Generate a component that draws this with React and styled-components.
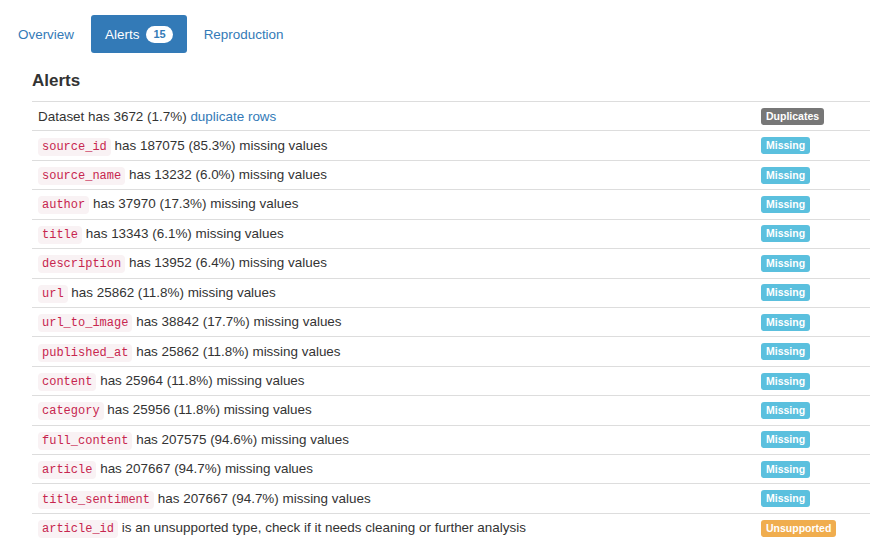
import React from "react";
import styled, { createGlobalStyle } from "styled-components";

const GlobalStyle = createGlobalStyle`
  body {
    margin: 0;
    background: #fff;
    font-family: "Liberation Sans", Arial, sans-serif;
    font-size: 13.45px;
    color: #333;
  }
`;

const alerts = [
  { text: ["Dataset has 3672 (1.7%) ", { link: "duplicate rows" }], kind: "Duplicates" },
  { col: "source_id", text: "has 187075 (85.3%) missing values", kind: "Missing" },
  { col: "source_name", text: "has 13232 (6.0%) missing values", kind: "Missing" },
  { col: "author", text: "has 37970 (17.3%) missing values", kind: "Missing" },
  { col: "title", text: "has 13343 (6.1%) missing values", kind: "Missing" },
  { col: "description", text: "has 13952 (6.4%) missing values", kind: "Missing" },
  { col: "url", text: "has 25862 (11.8%) missing values", kind: "Missing" },
  { col: "url_to_image", text: "has 38842 (17.7%) missing values", kind: "Missing" },
  { col: "published_at", text: "has 25862 (11.8%) missing values", kind: "Missing" },
  { col: "content", text: "has 25964 (11.8%) missing values", kind: "Missing" },
  { col: "category", text: "has 25956 (11.8%) missing values", kind: "Missing" },
  { col: "full_content", text: "has 207575 (94.6%) missing values", kind: "Missing" },
  { col: "article", text: "has 207667 (94.7%) missing values", kind: "Missing" },
  { col: "title_sentiment", text: "has 207667 (94.7%) missing values", kind: "Missing" },
  {
    col: "article_id",
    text: "is an unsupported type, check if it needs cleaning or further analysis",
    kind: "Unsupported",
  },
];

const labelColors = {
  Duplicates: "#777777",
  Missing: "#5bc0de",
  Unsupported: "#f0ad4e",
};

const App = () => {
  return (
    <Page>
      <GlobalStyle />
      <Pills>
        <Pill>Overview</Pill>
        <Pill active>
          Alerts <Count>15</Count>
        </Pill>
        <Pill>Reproduction</Pill>
      </Pills>
      <Section>
        <Heading>Alerts</Heading>
        <Table>
          {alerts.map((a, i) => (
            <Row key={i}>
              <Cell>
                {a.col && <Code>{a.col}</Code>}
                {a.col && " "}
                {Array.isArray(a.text)
                  ? a.text.map((t, j) =>
                      typeof t === "string" ? t : <Link key={j}>{t.link}</Link>
                    )
                  : a.text}
              </Cell>
              <LabelCell>
                <Label color={labelColors[a.kind]}>{a.kind}</Label>
              </LabelCell>
            </Row>
          ))}
        </Table>
      </Section>
    </Page>
  );
};

const Page = styled.div`
  padding: 15px 0 0 4px;
`;

const Pills = styled.ul`
  display: flex;
  list-style: none;
  margin: 0;
  padding: 0;
`;

const Pill = styled.li`
  display: flex;
  align-items: center;
  gap: 7px;
  height: 38px;
  box-sizing: border-box;
  padding: 0 14px;
  margin-right: 3px;
  border-radius: 3px;
  font-size: 13.45px;
  color: ${({ active }) => (active ? "#fff" : "#337ab7")};
  background: ${({ active }) => (active ? "#337ab7" : "transparent")};
`;

const Count = styled.span`
  display: inline-block;
  background: #fff;
  color: #337ab7;
  font-size: 11px;
  font-weight: bold;
  line-height: 17px;
  padding: 0 7px;
  border-radius: 9px;
`;

const Section = styled.div`
  padding-left: 28px;
`;

const Heading = styled.h4`
  margin: 18px 0 10px;
  font-size: 17px;
  font-weight: bold;
  line-height: 20px;
  color: #333;
`;

const Table = styled.div`
  display: flex;
  flex-direction: column;
`;

const Row = styled.div`
  display: grid;
  grid-template-columns: 1fr 109px;
  height: 29.43px;
  box-sizing: border-box;
  border-top: 1px solid #ddd;
  align-items: center;
`;

const Cell = styled.div`
  padding: 1px 6px 0;
  white-space: nowrap;
  line-height: 20px;
`;

const LabelCell = styled.div`
  display: flex;
`;

const Code = styled.code`
  font-family: "Liberation Mono", "DejaVu Sans Mono", monospace;
  font-size: 12px;
  color: #c7254e;
  background: #f9f2f4;
  padding: 2px 4px;
  border-radius: 4px;
`;

const Link = styled.span`
  color: #337ab7;
`;

const Label = styled.span`
  display: inline-block;
  background: ${({ color }) => color};
  color: #fff;
  font-size: 10.5px;
  font-weight: bold;
  line-height: 17px;
  padding: 0 5px;
  border-radius: 3px;
`;

export default App;
